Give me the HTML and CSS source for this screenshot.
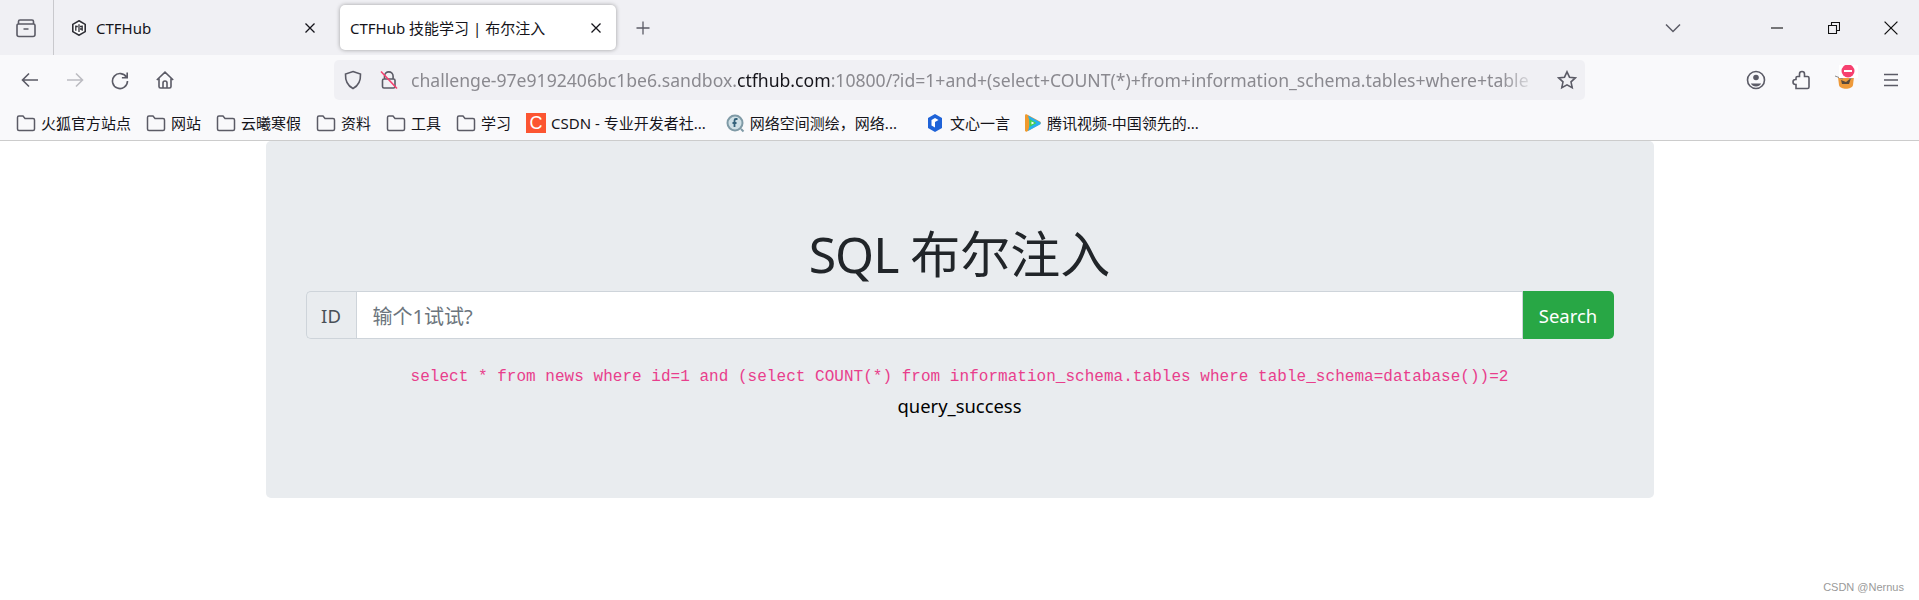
FILE: index.html
```html
<!DOCTYPE html>
<html lang="zh-CN">
<head>
<meta charset="utf-8">
<title>CTFHub 技能学习 | 布尔注入</title>
<link rel="stylesheet" href="styles.css">
</head>
<body>
<header class="chrome">
  <div class="tabbar">
    <div class="view-btn">
      <svg class="ico" viewBox="0 0 20 20"><path d="M1 7.500a1.500 1.500 0 0 1 1.500-1.500h15A1.500 1.500 0 0 1 19 7.500v9a2 2 0 0 1-2 2H3a2 2 0 0 1-2-2zM4 2h12a1.500 1.500 0 0 1 1.500 1.500V6M4 2a1.500 1.500 0 0 0-1.500 1.500V6M7.500 11h5"/></svg>
    </div>
    <div class="tab">
      <svg class="favicon" viewBox="0 0 16 16"><path class="fav-hex" d="M8 .8l6.200 3.600v7.200L8 15.200 1.800 11.600V4.400z"/><path class="fav-in" d="M4.800 5.500v5.200M8 4.200v7.800M11.200 5.500v5.200M4.800 6.500h2M9 6.500h2.200M9 9h2.200"/></svg>
      <span class="tab-title">CTFHub</span>
      <svg class="tab-x" viewBox="0 0 12 12"><path d="M1.500 1.500l9 9M10.500 1.500l-9 9"/></svg>
    </div>
    <div class="tab tab-active">
      <span class="tab-title">CTFHub 技能学习 | 布尔注入</span>
      <svg class="tab-x" viewBox="0 0 12 12"><path d="M1.500 1.500l9 9M10.500 1.500l-9 9"/></svg>
    </div>
    <svg class="tab-plus" viewBox="0 0 16 16"><path d="M8 1.500v13M1.500 8h13"/></svg>
    <div class="spacer"></div>
    <svg class="tab-list" viewBox="0 0 16 10"><path d="M1 1.500l7 7 7-7"/></svg>
    <div class="win-btns">
      <div class="win-btn"><svg viewBox="0 0 12 12"><path d="M0 6h12"/></svg></div>
      <div class="win-btn"><svg viewBox="0 0 12 12"><path d="M.5 3.500h8v8h-8zM3.500 3.500V.5h8v8h-3"/></svg></div>
      <div class="win-btn"><svg class="win-close" viewBox="0 0 12 12"><path d="M.5.5l11 11M11.500.5l-11 11"/></svg></div>
    </div>
  </div>

  <div class="toolbar">
    <div class="nav-btn"><svg class="ico" viewBox="0 0 20 20"><path d="M18 10H2.500M9 3.500L2.500 10 9 16.500"/></svg></div>
    <div class="nav-btn nav-off"><svg class="ico" viewBox="0 0 20 20"><path d="M2 10h15.500M11 3.500l6.500 6.500-6.500 6.500"/></svg></div>
    <div class="nav-btn"><svg class="ico" viewBox="0 0 20 20"><path d="M16.600 7.500A7.500 7.500 0 1 0 17.500 11M17.200 2.500v5.300h-5.300"/></svg></div>
    <div class="nav-btn"><svg class="ico" viewBox="0 0 20 20"><path d="M1.800 10L10 2.200 18.200 10M4 8.500v8a1.500 1.500 0 0 0 1.500 1.500h9a1.500 1.500 0 0 0 1.500-1.500v-8M8 18v-5a2 2 0 0 1 4 0v5"/></svg></div>
    <div class="urlbar">
      <svg class="ico url-shield" viewBox="0 0 20 20"><path d="M10 1.500l7.500 2.500c.3 6.500-1.500 11.500-7.500 14.500C4 15.500 2.200 10.500 2.500 4z"/></svg>
      <svg class="url-lock" viewBox="0 0 20 20"><path class="lock-body" d="M5.500 9V6.200a4.300 4.300 0 0 1 8.600 0V9M3.500 10.500a1.500 1.500 0 0 1 1.500-1.500h9.500a1.500 1.500 0 0 1 1.500 1.500v6a1.500 1.500 0 0 1-1.500 1.500H5a1.500 1.500 0 0 1-1.500-1.500z"/><path class="lock-slash" d="M2 1.500l16 17"/></svg>
      <div class="url-text">challenge-97e9192406bc1be6.sandbox.<b class="url-host">ctfhub.com</b>:10800/?id=1+and+(select+COUNT(*)+from+information_schema.tables+where+table</div>
      <svg class="ico url-star" viewBox="0 0 20 20"><path d="M10 1.800l2.500 5.400 5.800.7-4.300 4 1.200 5.800L10 14.800l-5.200 2.900L6 11.900l-4.300-4 5.800-.7z"/></svg>
    </div>
    <div class="tool-btns">
      <div class="nav-btn"><svg class="ico" viewBox="0 0 20 20"><circle cx="10" cy="10" r="8.500"/><circle class="solid" cx="10" cy="7.500" r="2.800"/><path class="solid" d="M4.800 13.500h10.400c-1 2-3 3-5.200 3s-4.200-1-5.200-3z"/></svg></div>
      <div class="nav-btn"><svg class="ico" viewBox="0 0 20 20"><path d="M5 18.500h11.500a1.500 1.500 0 0 0 1.500-1.500V8a1.500 1.500 0 0 0-1.500-1.500h-3V4a2.500 2.500 0 0 0-5 0v2.500h-2A1.500 1.500 0 0 0 5 8v1.500h-.5a2.500 2.500 0 0 0 0 5H5z"/></svg></div>
      <div class="nav-btn">
        <svg class="ext-ico" viewBox="0 0 24 30"><path d="M4 12h16l-1 8c-1 5-13 5-14 0z" fill="#ee9a3a"/><path d="M7 15l5 2 5-4-2 6H8z" fill="#5a4a3a"/><path d="M1 11l8 3M23 11l-8 3" stroke="#8a8a8a" fill="none"/><rect x="5" y="0" width="19" height="13" fill="#fff"/><circle cx="14" cy="6" r="6.500" fill="#f6406f"/><rect x="10" y="5" width="8" height="2" fill="#fff"/></svg>
      </div>
      <div class="nav-btn"><svg class="ico" viewBox="0 0 20 20"><path d="M3 4.500h14M3 10h14M3 15.500h14"/></svg></div>
    </div>
  </div>

  <nav class="bookmarks">
    <div class="bm"><svg class="folder" viewBox="0 0 20 18"><path d="M1.500 3.500A1.500 1.500 0 0 1 3 2h4l2 2.500h8A1.500 1.500 0 0 1 18.500 6v9a1.500 1.500 0 0 1-1.500 1.500H3A1.500 1.500 0 0 1 1.500 15z"/></svg><span>火狐官方站点</span></div>
    <div class="bm"><svg class="folder" viewBox="0 0 20 18"><path d="M1.500 3.500A1.500 1.500 0 0 1 3 2h4l2 2.500h8A1.500 1.500 0 0 1 18.500 6v9a1.500 1.500 0 0 1-1.500 1.500H3A1.500 1.500 0 0 1 1.500 15z"/></svg><span>网站</span></div>
    <div class="bm"><svg class="folder" viewBox="0 0 20 18"><path d="M1.500 3.500A1.500 1.500 0 0 1 3 2h4l2 2.500h8A1.500 1.500 0 0 1 18.500 6v9a1.500 1.500 0 0 1-1.500 1.500H3A1.500 1.500 0 0 1 1.500 15z"/></svg><span>云曦寒假</span></div>
    <div class="bm"><svg class="folder" viewBox="0 0 20 18"><path d="M1.500 3.500A1.500 1.500 0 0 1 3 2h4l2 2.500h8A1.500 1.500 0 0 1 18.500 6v9a1.500 1.500 0 0 1-1.500 1.500H3A1.500 1.500 0 0 1 1.500 15z"/></svg><span>资料</span></div>
    <div class="bm"><svg class="folder" viewBox="0 0 20 18"><path d="M1.500 3.500A1.500 1.500 0 0 1 3 2h4l2 2.500h8A1.500 1.500 0 0 1 18.500 6v9a1.500 1.500 0 0 1-1.500 1.500H3A1.500 1.500 0 0 1 1.500 15z"/></svg><span>工具</span></div>
    <div class="bm"><svg class="folder" viewBox="0 0 20 18"><path d="M1.500 3.500A1.500 1.500 0 0 1 3 2h4l2 2.500h8A1.500 1.500 0 0 1 18.500 6v9a1.500 1.500 0 0 1-1.500 1.500H3A1.500 1.500 0 0 1 1.500 15z"/></svg><span>学习</span></div>
    <div class="bm bm-csdn"><span class="csdn-ico">C</span><span>CSDN - 专业开发者社...</span></div>
    <div class="bm"><svg class="site-ico" viewBox="0 0 20 20"><circle cx="10" cy="10" r="7.500" fill="#cfe0e6" stroke="#7f9aa6" stroke-width="2"/><path d="M16 16l2.500 2.500" stroke="#7f9aa6" stroke-width="2"/><path d="M12.500 6h-1.500a1.500 1.500 0 0 0-1.500 1.500V14M7.500 10h4" stroke="#33617a" stroke-width="1.800" fill="none"/></svg><span>网络空间测绘，网络...</span></div>
    <div class="bm bm-gap"><svg class="site-ico" viewBox="0 0 20 20"><path d="M10 1l7 4v10l-7 4-7-4V5z" fill="#1f63d8"/><path d="M10 5l3.500 2-3.500 2v5.500L6.500 12.500V7z" fill="#fff"/></svg><span>文心一言</span></div>
    <div class="bm bm-last"><svg class="site-ico" viewBox="0 0 20 20"><path d="M3 2.500C3 1.500 4 1 5 1.500l13 7c1 .6 1 2 0 2.600l-13 7.400c-1 .5-2 0-2-1z" fill="#f09a2e"/><path d="M6 2.500l12 6.500c1 .6 1 2 0 2.600L6 18c2-5 2-10 0-15.500z" fill="#27b0f0"/><path d="M7.500 6l7 4-7 4z" fill="#44d04a"/><path d="M9.500 8.500l2.800 1.500-2.800 1.500z" fill="#fff"/></svg><span>腾讯视频-中国领先的...</span></div>
  </nav>
</header>

<main class="jumbotron">
  <h1 class="title"><span class="title-latin">SQL </span>布尔注入</h1>
  <form class="input-group">
    <span class="addon">ID</span>
    <div class="field">输个1试试?</div>
    <div class="search">Search</div>
  </form>
  <p class="result"><code class="sql">select * from news where id=1 and (select COUNT(*) from information_schema.tables where table_schema=database())=2</code></p>
  <p class="status">query_success</p>
</main>
<div class="watermark">CSDN @Nernus</div>
</body>
</html>
```

FILE: styles.css
```css
* { box-sizing: border-box; }
html, body { margin: 0; height: 100%; background: #fff; overflow: hidden; }
body {
  position: relative;
  font-family: "Noto Sans", "Noto Sans CJK SC", sans-serif;
  color: #15141a;
}
svg { display: block; flex: none; }

.chrome { background: #f9f9fb; border-bottom: 1px solid #ccc; height: 141px; }

/* tab strip */
.tabbar { display: flex; align-items: center; height: 55px; background: #f0f0f4; }
.view-btn {
  display: flex; align-items: center; justify-content: center;
  width: 54px; height: 55px; border-right: 1px solid #c9c9cd; margin-right: 8px; padding-right: 1px;
}
.ico { width: 20px; height: 20px; fill: none; stroke: #5b5b66; stroke-width: 1.6; }
.ico .solid { fill: #5b5b66; stroke: none; }
.tab {
  display: flex; align-items: center; width: 272px; height: 45px;
  margin-right: 6px; padding: 0 18px 0 9px; font-size: 15px; border-radius: 5px;
}
.tab-active {
  width: 276px; padding-left: 10px; padding-right: 14px; margin-right: 0;
  background: #fff; box-shadow: 0 0 4px rgba(0, 0, 0, .35);
}
.favicon { width: 16px; height: 16px; margin-right: 9px; }
.fav-hex { fill: #fff; stroke: #2f2f36; stroke-width: 1.6; }
.fav-in { fill: none; stroke: #2f2f36; stroke-width: 1.3; }
.tab-title { flex: 1; white-space: nowrap; overflow: hidden; }
.tab-x { width: 12px; height: 12px; fill: none; stroke: #15141a; stroke-width: 1.3; }
.tab-plus { width: 16px; height: 16px; margin-left: 19px; fill: none; stroke: #5b5b66; stroke-width: 1.3; }
.spacer { flex: 1; }
.tab-list { width: 16px; height: 10px; margin-right: 67px; fill: none; stroke: #5b5b66; stroke-width: 1.5; }
.win-btns { display: flex; }
.win-btn { display: flex; align-items: center; justify-content: center; width: 57px; height: 55px; }
.win-btn svg { width: 12px; height: 12px; fill: none; stroke: #111; stroke-width: 1.1; }
.win-btn .win-close { width: 14px; height: 14px; }

/* toolbar */
.toolbar { display: flex; align-items: center; height: 50px; padding-left: 7px; }
.nav-btn { display: flex; align-items: center; justify-content: center; width: 45px; height: 40px; flex: none; }
.nav-off .ico { stroke: #bcbcc2; }
.urlbar {
  display: flex; align-items: center; flex: 1; height: 40px; margin-left: 147px;
  background: #f0f0f4; border-radius: 5px; padding: 0 8px 0 9px; min-width: 0;
}
.url-shield { margin-right: 16px; }
.url-lock { width: 20px; height: 20px; margin-right: 12px; fill: none; }
.lock-body { stroke: #5b5b66; stroke-width: 1.6; }
.lock-slash { stroke: #f6406f; stroke-width: 1.6; }
.url-text {
  flex: 1; min-width: 0; white-space: nowrap; font-size: 17.6px; color: #8a898f;
  -webkit-mask-image: linear-gradient(to left, transparent 10px, #000 46px);
  mask-image: linear-gradient(to left, transparent 10px, #000 46px);
}
.url-host { font-weight: 400; color: #15141a; }
.url-star { margin-left: 10px; }
.tool-btns { display: flex; margin-left: 148px; padding-right: 6px; }
.ext-ico { width: 24px; height: 30px; }

/* bookmarks */
.bookmarks { display: flex; align-items: center; height: 35px; padding-left: 16px; gap: 15px; font-size: 15px; }
.bm { display: flex; align-items: center; gap: 5px; white-space: nowrap; }
.bm-csdn { margin-right: 4px; }
.bm-gap { margin-left: 13px; }
.bm-last { margin-left: -3px; }
.folder { width: 20px; height: 18px; fill: none; stroke: #5b5b66; stroke-width: 1.5; }
.site-ico { width: 20px; height: 20px; }
.csdn-ico {
  display: block; width: 20px; height: 20px; background: #fc5531; color: #fff;
  font: 400 18px/20px "Liberation Sans", sans-serif; text-align: center;
}

/* page */
.jumbotron {
  width: 1388px; height: 357px; margin: 0 auto; padding: 64px 40px 0;
  background: #e9ecef; border-radius: 5px;
}
.title {
  margin: 0; height: 86px; font-size: 50px; font-weight: 400; line-height: 98px;
  text-align: center; color: #212529;
}
.title-latin { letter-spacing: -1px; }
.input-group { display: flex; height: 48px; font-size: 20px; }
.addon {
  display: flex; align-items: center; justify-content: center; width: 50px; font-size: 18.5px;
  border: 1px solid #ced4da; border-right: 0; border-radius: 5px 0 0 5px; color: #495057;
}
.field {
  flex: 1; display: flex; align-items: center; padding: 0 16px;
  background: #fff; border: 1px solid #ced4da; color: #6c757d;
}
.search {
  display: flex; align-items: center; justify-content: center; width: 91px; font-size: 18.5px;
  background: #28a745; color: #fff; border-radius: 0 5px 5px 0;
}
.result { margin: 20px 0 0; height: 32px; text-align: center; line-height: 32px; }
.sql { font-family: "Liberation Mono", monospace; font-size: 16px; letter-spacing: .03px; color: #e83e8c; }
.status { margin: 0; text-align: center; font-size: 18.4px; line-height: 30px; color: #000; }
.watermark {
  position: absolute; right: 15px; bottom: 6px;
  font: 11px/14px "Liberation Sans", sans-serif; color: #9a9a9a;
}
```
